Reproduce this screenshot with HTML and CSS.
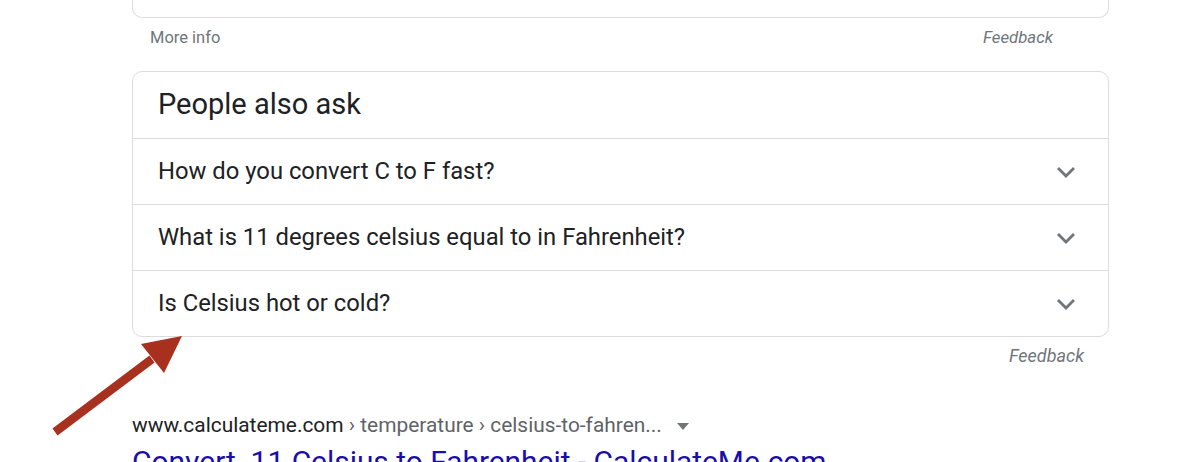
FILE: index.html
```html
<!DOCTYPE html>
<html>
<head>
<meta charset="utf-8">
<link rel="stylesheet" href="styles.css">
</head>
<body>
<div class="page">
  <div class="col">
    <div class="prev-card"></div>
    <div class="meta-row">
      <span class="more-info">More info</span>
      <span class="feedback">Feedback</span>
    </div>
    <div class="paa">
      <div class="paa-title">People also ask</div>
      <div class="paa-row"><span>How do you convert C to F fast?</span><svg class="chev" viewBox="0 0 20 12"><path d="M2 2 L10 10 L18 2" fill="none" stroke="#70757a" stroke-width="2.8"/></svg></div>
      <div class="paa-row"><span>What is 11 degrees celsius equal to in Fahrenheit?</span><svg class="chev" viewBox="0 0 20 12"><path d="M2 2 L10 10 L18 2" fill="none" stroke="#70757a" stroke-width="2.8"/></svg></div>
      <div class="paa-row"><span>Is Celsius hot or cold?</span><svg class="chev" viewBox="0 0 20 12"><path d="M2 2 L10 10 L18 2" fill="none" stroke="#70757a" stroke-width="2.8"/></svg></div>
    </div>
    <div class="feedback-row"><span class="feedback feedback-lg">Feedback</span></div>
    <div class="result">
      <div class="cite"><span class="host">www.calculateme.com</span><span class="crumbs"> › temperature › celsius-to-fahren...</span><span class="tri"></span></div>
      <div class="title">Convert &nbsp;11 Celsius to Fahrenheit - CalculateMe.com</div>
    </div>
  </div>
  <svg class="arrow" width="200" height="110" viewBox="0 0 200 110">
    <line x1="55" y1="101" x2="152" y2="28" stroke="#a8301f" stroke-width="8.5"/>
    <polygon points="182,5 141,13 164,42" fill="#a8301f"/>
  </svg>
</div>
</body>
</html>
```
FILE: styles.css
```css
html, body {
  margin: 0;
  padding: 0;
  background: #fff;
  overflow: hidden;
}
.page {
  position: relative;
  width: 1200px;
  height: 462px;
  font-family: Roboto, "Liberation Sans", Arial, sans-serif;
}
.col {
  margin-left: 132px;
  width: 977px;
  display: flex;
  flex-direction: column;
}
.prev-card {
  height: 18px;
  border: 1px solid #dadce0;
  border-top: none;
  border-radius: 0 0 10px 10px;
  box-sizing: border-box;
}
.meta-row {
  display: flex;
  justify-content: space-between;
  align-items: center;
  height: 38px;
  padding: 0 56px 0 18px;
}
.more-info {
  font-size: 16.5px;
  color: #70757a;
}
.feedback {
  font-size: 16.8px;
  font-style: italic;
  color: #70757a;
}
.feedback-lg {
  font-size: 18px;
}
.paa {
  margin-top: 15px;
  border: 1px solid #dadce0;
  border-radius: 10px;
  box-sizing: border-box;
}
.paa-title {
  height: 66px;
  display: flex;
  align-items: center;
  padding-left: 25px;
  font-size: 29px;
  color: #202124;
  box-sizing: border-box;
  padding-bottom: 2px;
}
.paa-row {
  height: 66px;
  border-top: 1px solid #dadce0;
  display: flex;
  align-items: center;
  justify-content: space-between;
  padding: 0 32px 0 25px;
  font-size: 23.8px;
  color: #202124;
  box-sizing: border-box;
  padding-bottom: 2px;
}
.chev {
  width: 20px;
  height: 12px;
  margin-top: 2px;
}
.feedback-row {
  display: flex;
  justify-content: flex-end;
  height: 36px;
  align-items: center;
  padding-right: 25px;
}
.result {
  margin-top: 38px;
}
.cite {
  display: flex;
  align-items: center;
  font-size: 20.9px;
  height: 28px;
  white-space: nowrap;
}
.host {
  color: #202124;
}
.crumbs {
  color: #5f6368;
  white-space: pre;
}
.tri {
  width: 0;
  height: 0;
  border-left: 6px solid transparent;
  border-right: 6px solid transparent;
  border-top: 7px solid #70757a;
  margin-left: 15px;
  margin-top: 2px;
}
.title {
  font-size: 29.9px;
  color: #1a0dab;
  margin-top: 5px;
  white-space: nowrap;
}
.arrow {
  position: absolute;
  left: 0;
  top: 331px;
}
```
